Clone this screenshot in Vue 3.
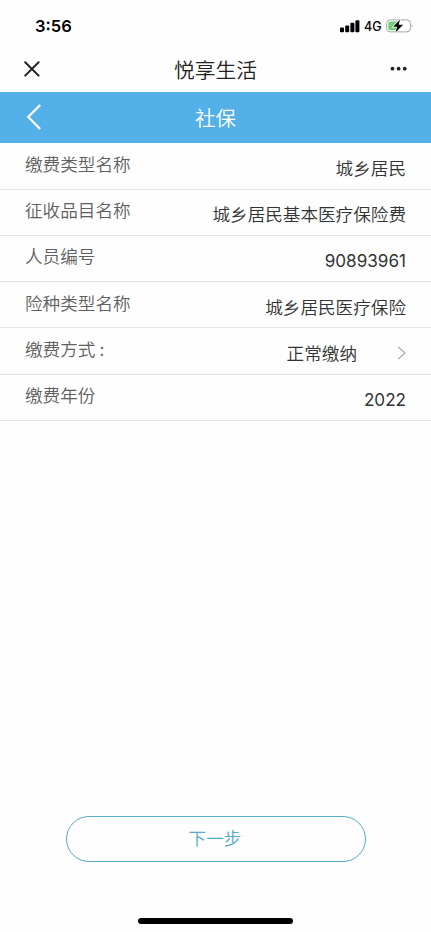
<script setup>
const rows = [
  { label: '缴费类型名称', value: '城乡居民' },
  { label: '征收品目名称', value: '城乡居民基本医疗保险费' },
  { label: '人员编号', value: '90893961', numeric: true },
  { label: '险种类型名称', value: '城乡居民医疗保险' },
  { label: '缴费方式', colon: true, value: '正常缴纳', link: true },
  { label: '缴费年份', value: '2022', numeric: true },
]
</script>

<template>
  <div class="screen">
    <div class="status">
      <span class="time">3:56</span>
      <div class="indicators">
        <svg class="signal" width="20" height="13" viewBox="0 0 20 13">
          <rect x="0" y="7.6" width="4" height="4.6" rx="1" />
          <rect x="5.2" y="5.4" width="4" height="6.8" rx="1" />
          <rect x="10.4" y="2.8" width="4" height="9.4" rx="1" />
          <rect x="15.4" y="0.2" width="4" height="12" rx="1" />
        </svg>
        <span class="network">4G</span>
        <svg class="battery" width="28" height="14" viewBox="0 0 28 14">
          <rect x="0.6" y="0.9" width="23.8" height="12" rx="3.6" fill="#fff" stroke="#a3a8a3" />
          <path d="M4.2 2.5H13v8.8H4.2A2 2 0 0 1 2.2 9.3V4.5a2 2 0 0 1 2-2Z" fill="#75ca7d" />
          <path d="M25.7 5.1q1.6 1.8 0 3.6Z" fill="#8e938e" />
          <path d="M14 0.6 7.2 7.7h3.9L9.4 13.4l7.8-7.7h-4.5Z" fill="#000" stroke="#fff" stroke-width="1.4" paint-order="stroke" />
        </svg>
      </div>
    </div>

    <header class="titlebar">
      <svg width="16" height="16" viewBox="0 0 16 16" fill="none" stroke="#222" stroke-width="2" stroke-linecap="round">
        <path d="M1.2 1.2 14.6 14.6M14.6 1.2 1.2 14.6" />
      </svg>
      <h1>悦享生活</h1>
      <svg width="18" height="6" viewBox="0 0 18 6" fill="#222">
        <circle cx="2.5" cy="2.7" r="1.9" />
        <circle cx="8.6" cy="2.7" r="1.9" />
        <circle cx="14.8" cy="2.7" r="1.9" />
      </svg>
    </header>

    <nav class="navbar">
      <svg width="16" height="26" viewBox="0 0 16 26" fill="none" stroke="#fff" stroke-width="2.2">
        <path d="M14.2 1 2.2 13 14.2 25" />
      </svg>
      <h2>社保</h2>
      <span></span>
    </nav>

    <main class="list">
      <div v-for="row in rows" :key="row.label" class="row">
        <span class="label">{{ row.label }}<span v-if="row.colon" class="colon">:</span></span>
        <span class="value" :class="{ numeric: row.numeric }">{{ row.value }}</span>
        <svg v-if="row.link" class="chevron" width="9" height="14" viewBox="0 0 9 14" fill="none" stroke="#aaa" stroke-width="1.2">
          <path d="M1.3 1 8 7 1.3 13" />
        </svg>
      </div>
    </main>

    <footer class="footer">
      <button class="next">下一步</button>
      <div class="home"></div>
    </footer>
  </div>
</template>

<style>
body {
  background: #fff;
}
</style>

<style scoped>
.screen {
  width: 431px;
  height: 932px;
  display: flex;
  flex-direction: column;
  box-sizing: border-box;
  overflow: hidden;
  background: #fefefe;
  font-family: "Noto Sans CJK SC", sans-serif;
  font-weight: 350;
}
.status {
  height: 46px;
  box-sizing: border-box;
  padding: 6px 17px 0 35px;
  display: flex;
  align-items: center;
  justify-content: space-between;
  font-family: Inter, sans-serif;
  color: #000;
}
.time {
  font-size: 16.5px;
  font-weight: 600;
}
.indicators {
  display: flex;
  align-items: center;
}
.network {
  width: 18px;
  margin: 1px 4px 0 4px;
  font-size: 12.5px;
  font-weight: 500;
}
.titlebar {
  height: 46px;
  box-sizing: border-box;
  padding: 0 23px 0 24px;
  display: grid;
  grid-template-columns: 1fr auto 1fr;
  align-items: center;
}
.titlebar > :last-child,
.navbar > :last-child {
  justify-self: end;
}
h1,
h2 {
  margin: 0;
  font-weight: 350;
  line-height: 30px;
}
h1 {
  margin-right: 1px;
  font-size: 20.8px;
  color: #222;
}
.navbar {
  height: 51px;
  box-sizing: border-box;
  padding: 0 26px 2px;
  display: grid;
  grid-template-columns: 1fr auto 1fr;
  align-items: center;
  background: #53b0e9;
}
h2 {
  font-size: 20.5px;
  color: #fff;
}
.list {
  padding-top: 0.4px;
}
.row {
  height: 46.25px;
  box-sizing: border-box;
  padding: 0 25px;
  display: flex;
  border-bottom: 1px solid #e6e6e6;
  font-size: 17.6px;
  line-height: 26px;
}
.label {
  padding-top: 7.6px;
  color: #606060;
}
.colon {
  margin-left: 4px;
}
.value {
  margin-left: auto;
  padding-top: 11.6px;
  color: #333;
}
.numeric {
  padding-top: 12.3px;
  font-family: Inter, sans-serif;
  font-size: 17.1px;
  font-weight: 400;
}
.chevron {
  margin: 17.6px 0 0 40px;
}
.footer {
  margin-top: auto;
  height: 116px;
  display: flex;
  flex-direction: column;
  align-items: center;
}
.next {
  width: 300px;
  height: 46px;
  box-sizing: border-box;
  padding: 0 1px 2px 0;
  border: 1px solid #55abc9;
  border-radius: 23px;
  background: transparent;
  color: #55abc9;
  font-family: inherit;
  font-size: 17.6px;
  font-weight: 350;
  line-height: 42px;
}
.home {
  width: 155px;
  height: 6px;
  margin-top: 56px;
  border-radius: 3px;
  background: #000;
}
</style>
